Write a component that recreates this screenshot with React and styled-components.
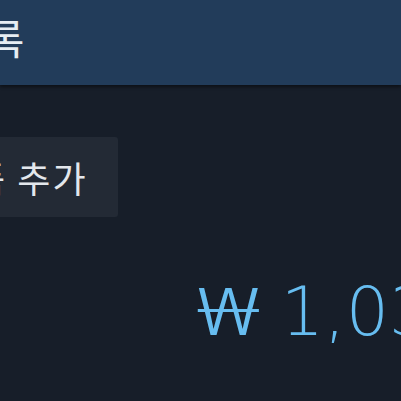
import React from "react";
import styled, { createGlobalStyle } from "styled-components";

const Global = createGlobalStyle`
  html, body { margin: 0; padding: 0; }
  body {
    background: #171e29;
    overflow: hidden;
    font-family: "Noto Sans", "Noto Sans CJK KR", sans-serif;
  }
`;

const Page = styled.div`
  width: 401px;
  height: 401px;
  overflow: hidden;
  background: #171e29;
  display: flex;
  flex-direction: column;
`;

const Header = styled.header`
  height: 85px;
  flex: none;
  background: #223c5a;
  box-shadow: 0 2px 3px rgba(0, 0, 0, 0.45);
  display: flex;
  align-items: center;
  position: relative;
  z-index: 1;
`;

const Title = styled.h1`
  margin: -12px 0 0 -101px;
  font-family: "Noto Sans CJK KR", sans-serif;
  font-weight: 400;
  font-size: 42px;
  line-height: 1;
  color: #e6edf3;
  white-space: nowrap;
`;

const Toolbar = styled.div`
  margin-top: 52px;
  display: flex;
`;

const AddButton = styled.button`
  margin-left: -93px;
  height: 80px;
  padding: 0 30px 0 30px;
  border: none;
  border-radius: 3px;
  background: #232a35;
  color: #e3e7ec;
  font-family: "Noto Sans CJK KR", sans-serif;
  font-size: 36px;
  letter-spacing: 2px;
  line-height: 1;
  white-space: nowrap;
  display: inline-flex;
  align-items: center;
`;

const PriceRow = styled.div`
  margin-top: 59px;
  padding-left: 197px;
  display: flex;
  align-items: baseline;
`;

const Currency = styled.span`
  display: inline-block;
  font-family: "Noto Sans", sans-serif;
  font-weight: 300;
  font-size: 66px;
  line-height: 1;
  color: #67bdf0;
  transform: scaleX(1.5);
  transform-origin: left center;
  margin-right: 42px;
`;

const Price = styled.span`
  font-family: "DejaVu Sans", sans-serif;
  font-weight: 200;
  font-size: 68px;
  line-height: 1;
  color: #67bdf0;
  white-space: nowrap;
`;

export default function App() {
  return (
    <>
      <Global />
      <Page>
        <Header>
          <Title>찜 목록</Title>
        </Header>
        <Toolbar>
          <AddButton>제품 추가</AddButton>
        </Toolbar>
        <PriceRow>
          <Currency>₩</Currency>
          <Price>1,034,000</Price>
        </PriceRow>
      </Page>
    </>
  );
}
